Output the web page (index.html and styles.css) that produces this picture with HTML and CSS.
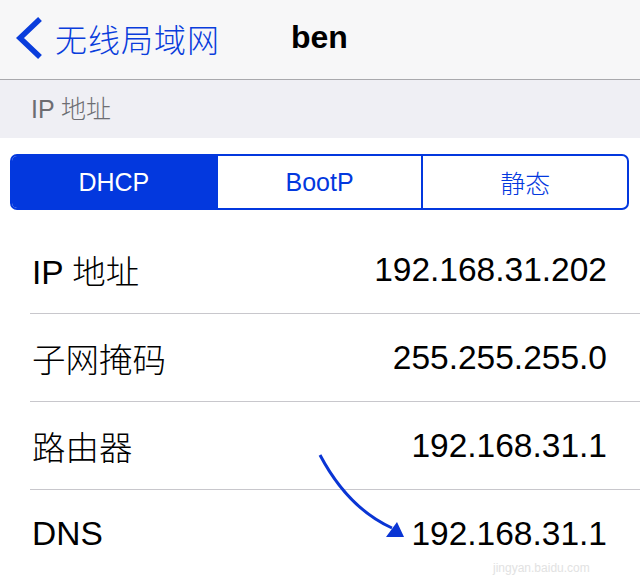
FILE: index.html
```html
<!DOCTYPE html>
<html>
<head>
<meta charset="utf-8">
<link rel="stylesheet" href="styles.css">
</head>
<body>
<div class="screen">
  <div class="navbar">
    <div class="back">
      <svg class="chevron" width="30" height="44" viewBox="0 0 30 44">
        <polyline points="25,3 5,22 25,41" fill="none" stroke="#0a3ddc" stroke-width="5.5" stroke-linecap="butt" stroke-linejoin="miter"/>
      </svg>
      <span class="back-label">无线局域网</span>
    </div>
    <div class="title">ben</div>
  </div>
  <div class="section-header">IP 地址</div>
  <div class="content">
    <div class="segmented">
      <div class="seg active">DHCP</div>
      <div class="seg">BootP</div>
      <div class="seg">静态</div>
    </div>
    <div class="list">
      <div class="row"><span class="label">IP 地址</span><span class="value">192.168.31.202</span></div>
      <div class="row"><span class="label">子网掩码</span><span class="value">255.255.255.0</span></div>
      <div class="row"><span class="label">路由器</span><span class="value">192.168.31.1</span></div>
      <div class="row last"><span class="label">DNS</span><span class="value">192.168.31.1</span></div>
    </div>
  </div>
  <svg class="arrow" width="640" height="578" viewBox="0 0 640 578">
    <path d="M320,455 Q348,508 392,528" fill="none" stroke="#0a35d4" stroke-width="3"/>
    <polygon points="386,537 397,522 404,537" fill="#0a35d4"/>
  </svg>
  <div class="watermark">jingyan.baidu.com</div>
</div>
</body>
</html>
```
FILE: styles.css
```css
html, body {
  margin: 0;
  padding: 0;
  background: #ffffff;
}
body {
  font-family: "Liberation Sans", "Noto Sans CJK SC", sans-serif;
}
.screen {
  position: relative;
  width: 640px;
  height: 578px;
  overflow: hidden;
}
.navbar {
  height: 79px;
  background: #f7f7f8;
  border-bottom: 1px solid #a9a9ad;
  display: flex;
  align-items: center;
  position: relative;
}
.back {
  display: flex;
  align-items: center;
  padding-left: 15px;
  gap: 10px;
  margin-top: -4px;
}
.chevron {
  display: block;
}
.back-label {
  font-size: 32px;
  font-weight: 300;
  color: #0a3ddc;
  letter-spacing: 1px;
}
.title {
  position: absolute;
  left: 291px;
  top: 0;
  line-height: 74px;
  font-size: 32px;
  font-weight: bold;
  color: #000;
}
.section-header {
  height: 58px;
  background: #efeff4;
  color: #6d6d72;
  font-size: 25px;
  font-weight: 300;
  line-height: 58px;
  padding-left: 31px;
}
.content {
  padding-top: 16px;
}
.segmented {
  margin: 0 11px 0 10px;
  height: 52px;
  border: 2px solid #0338de;
  border-radius: 7px;
  display: flex;
  overflow: hidden;
}
.seg {
  flex: 1;
  display: flex;
  align-items: center;
  justify-content: center;
  font-size: 25px;
  font-weight: 300;
  color: #0338de;
  border-left: 2px solid #0338de;
}
.seg:first-child {
  border-left: none;
}
.seg.active {
  background: #0338de;
  color: #ffffff;
}
.list {
  margin-top: 16px;
  padding-left: 30px;
}
.row {
  height: 87px;
  border-bottom: 1px solid #c8c7cc;
  display: flex;
  align-items: center;
  justify-content: space-between;
  padding-right: 33px;
  font-size: 33.5px;
  font-weight: 300;
  color: #000;
}
.row.last {
  border-bottom: none;
}
.label {
  padding-left: 2px;
}
.arrow {
  position: absolute;
  left: 0;
  top: 0;
}
.watermark {
  position: absolute;
  left: 493px;
  top: 561px;
  font-size: 12px;
  color: #e2e2e2;
}
```
